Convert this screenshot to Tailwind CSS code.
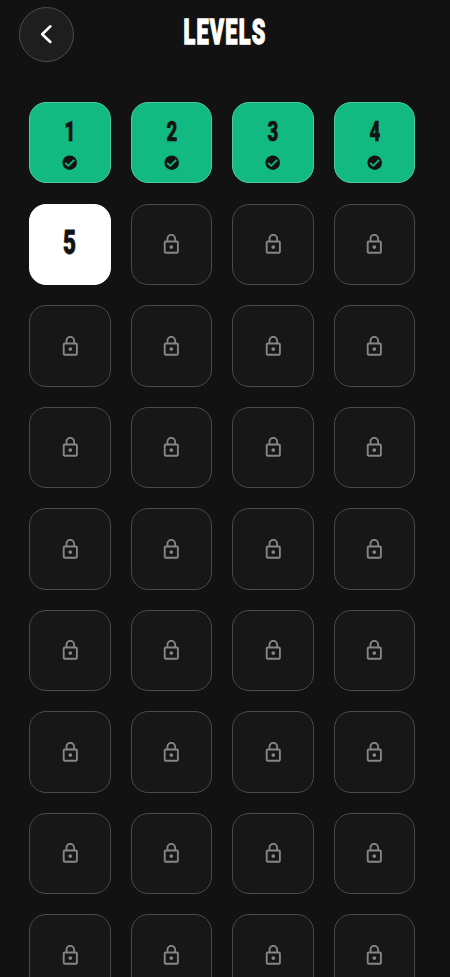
<!DOCTYPE html>
<html lang="en">
<head>
<meta charset="utf-8">
<title>Levels</title>
<script src="https://cdn.jsdelivr.net/npm/@tailwindcss/browser@4"></script>
</head>
<body class="bg-[#121212] h-[977px] overflow-hidden font-['Roboto','Liberation_Sans',sans-serif] text-white">
<header class="grid grid-cols-[1fr_auto_1fr] items-start pl-[19px] pr-[19px] pt-[6.5px] h-[102.2px]">
  <button aria-label="Back" class="size-[55px] rounded-full border border-[#4e4e4e] bg-[#1e1e1e] flex items-center justify-center">
    <svg class="size-[22px]" viewBox="0 0 22 22" fill="none" stroke="#fff" stroke-width="2.7" stroke-linecap="round" stroke-linejoin="round"><path d="M14.3 3.400 6.200 11.200l8.100 7.700"/></svg>
  </button>
  <h1 class="w-[84px] flex justify-center pt-[4px] text-[35.5px] leading-[43px] font-black"><span class="inline-block scale-x-[0.61] tracking-[2px] [-webkit-text-stroke:1.3px_#fff]">LEVELS</span></h1>
</header>
<main id="levels" class="grid grid-cols-[repeat(4,81.3px)] auto-rows-[81.3px] gap-[20.24px] pl-[29.3px]"></main>

<template id="done">
  <div class="rounded-[17px] border border-[#4fcb9f] bg-[#12b981] text-[#121212] flex flex-col items-center pt-[12.5px]">
    <span class="num inline-block text-[27.5px] leading-[32px] font-black scale-x-[0.68] [-webkit-text-stroke:0.6px_#121212]"></span>
    <svg class="size-[17.4px] mt-[6.500px]" viewBox="0 0 24 24"><circle cx="12" cy="12" r="10" fill="#121212"/><path d="m5.700 12.200 4.300 4.100 8.300-8.300" fill="none" stroke="#12b981" stroke-width="2.500"/></svg>
  </div>
</template>
<template id="current">
  <div class="rounded-[17px] border border-white bg-white text-[#121212] flex items-center justify-center">
    <span class="num inline-block text-[33px] leading-[40px] font-black scale-x-[0.68] -mt-[2px] [-webkit-text-stroke:0.8px_#121212]"></span>
  </div>
</template>
<template id="locked">
  <div class="rounded-[17px] border border-[#4a4a4a] bg-[#171717] text-[#868686] flex items-center justify-center">
    <svg class="size-[22.6px]" viewBox="0 0 24 24" fill="currentColor"><path d="M12 17c1.1 0 2-.9 2-2s-.9-2-2-2-2 .9-2 2 .9 2 2 2zm6-9h-1V6c0-2.76-2.24-5-5-5S7 3.240 7 6v2H6c-1.100 0-2 .9-2 2v10c0 1.100.9 2 2 2h12c1.100 0 2-.9 2-2V10c0-1.100-.9-2-2-2zM8.900 6c0-1.710 1.390-3.100 3.100-3.100s3.100 1.390 3.100 3.100v2H8.900V6zM18 20H6V10h12v10z"/></svg>
  </div>
</template>
<script>
const grid = document.getElementById('levels');
const currentLevel = 5;
for (let level = 1; level <= 36; level++) {
  const state = level < currentLevel ? 'done' : level === currentLevel ? 'current' : 'locked';
  const cell = document.getElementById(state).content.cloneNode(true);
  const num = cell.querySelector('.num');
  if (num) num.textContent = level;
  grid.append(cell);
}
</script>
</body>
</html>
